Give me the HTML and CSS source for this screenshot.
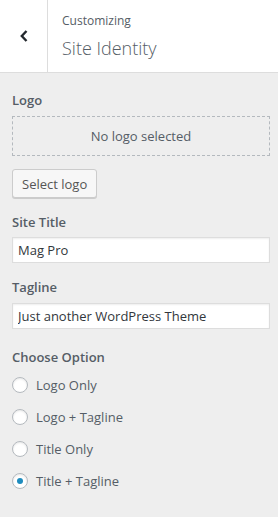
FILE: index.html
```html
<!DOCTYPE html>
<html lang="en">
<head>
    <meta charset="UTF-8">
    <title>Site Identity</title>
    <link rel="stylesheet" href="styles.css">
</head>
<body>
    <div class="panel">
        <div class="panel-header">
            <button class="back-btn" aria-label="Back">
                <svg width="10" height="14" viewBox="0 0 10 14"><path d="M7.5 2 L2.8 7 L7.5 12" fill="none" stroke="#23282d" stroke-width="2.4"/></svg>
            </button>
            <div class="header-title">
                <span class="customizing">Customizing</span>
                <h3>Site Identity</h3>
            </div>
        </div>

        <div class="controls">
            <div class="control">
                <span class="control-title">Logo</span>
                <div class="placeholder">No logo selected</div>
                <button class="select-btn">Select logo</button>
            </div>

            <div class="control">
                <label class="control-title" for="blogname">Site Title</label>
                <input type="text" id="blogname" class="text-input" value="Mag Pro">
            </div>

            <div class="control control-tagline">
                <label class="control-title" for="blogdescription">Tagline</label>
                <input type="text" id="blogdescription" class="text-input" value="Just another WordPress Theme">
            </div>

            <div class="control">
                <span class="control-title">Choose Option</span>
                <label class="radio-row"><span class="radio"></span>Logo Only</label>
                <label class="radio-row"><span class="radio"></span>Logo + Tagline</label>
                <label class="radio-row"><span class="radio"></span>Title Only</label>
                <label class="radio-row"><span class="radio checked"></span>Title + Tagline</label>
            </div>
        </div>
    </div>
</body>
</html>
```

FILE: styles.css
```css
body {
    margin: 0;
    font-family: 'Open Sans', 'Noto Sans', Arial, sans-serif;
    background-color: #eeeeee;
    color: #555d66;
}
.panel {
    width: 278px;
    min-height: 517px;
    background-color: #eeeeee;
}
.panel-header {
    display: flex;
    height: 72px;
    background-color: white;
    border-bottom: 1px solid #dddddd;
}
.back-btn {
    width: 48px;
    border: none;
    border-right: 1px solid #dddddd;
    background: white;
    padding: 0;
    display: flex;
    align-items: center;
    justify-content: center;
}
.header-title {
    padding: 12px 0 0 14px;
}
.customizing {
    display: block;
    font-size: 12px;
    line-height: 18px;
    color: #555d66;
}
h3 {
    margin: 6px 0 0;
    font-size: 18px;
    font-weight: 300;
    line-height: 24px;
    color: #555d66;
}
.controls {
    padding: 17px 8px 0 12px;
}
.control {
    margin-bottom: 14px;
}
.control-tagline {
    margin-bottom: 18px;
}
.control-title {
    display: block;
    font-size: 13px;
    font-weight: 600;
    line-height: 20px;
    margin-bottom: 6px;
    color: #555d66;
}
.control-tagline .control-title {
    margin-bottom: 7px;
}
.placeholder {
    box-sizing: border-box;
    height: 40px;
    border: 1px dashed #b4b9be;
    font-size: 13px;
    color: #555d66;
    display: flex;
    align-items: center;
    justify-content: center;
}
.select-btn {
    margin-top: 13px;
    height: 29px;
    padding: 0 9px;
    font-family: inherit;
    font-size: 13px;
    color: #555555;
    background-color: #f7f7f7;
    border: 1px solid #cccccc;
    border-radius: 3px;
    box-shadow: 0 1px 0 #cccccc;
}
.text-input {
    display: block;
    box-sizing: border-box;
    width: 100%;
    height: 26px;
    padding: 0 5px;
    font-family: inherit;
    font-size: 13px;
    color: #32373c;
    background-color: white;
    border: 1px solid #dddddd;
    box-shadow: inset 0 1px 2px rgba(0, 0, 0, 0.07);
    margin-top: -1px;
}
.radio-row {
    display: flex;
    align-items: center;
    height: 32px;
    font-size: 13px;
    color: #555d66;
}
.radio-row:first-of-type {
    margin-top: -4px;
}
.radio {
    box-sizing: border-box;
    width: 16px;
    height: 16px;
    border: 1px solid #b4b9be;
    border-radius: 50%;
    background-color: white;
    margin-right: 8px;
    display: flex;
    align-items: center;
    justify-content: center;
    box-shadow: inset 0 1px 2px rgba(0, 0, 0, 0.1);
}
.radio.checked::after {
    content: "";
    width: 6px;
    height: 6px;
    border-radius: 50%;
    background-color: #1e8cbe;
}
```
